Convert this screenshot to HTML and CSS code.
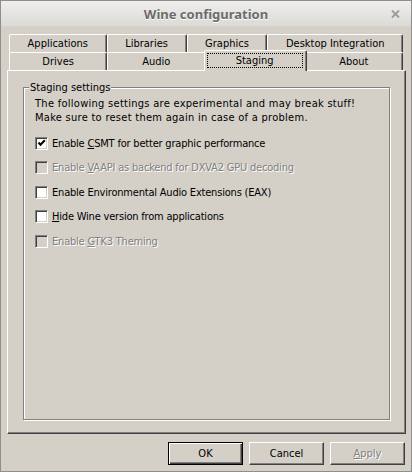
FILE: index.html
```html
<!DOCTYPE html>
<html lang="en">
<head>
  <meta charset="UTF-8">
  <title>Wine configuration</title>
  <link rel="stylesheet" href="styles.css">
</head>
<body>
  <div class="window">
    <!-- Title Bar -->
    <div class="titlebar">
      <span></span>
      <span class="title">Wine configuration</span>
      <span class="close">
        <svg width="9" height="8" viewBox="0 0 9 8"><path d="M1 0.5 L8 7.5 M8 0.5 L1 7.5" stroke="#999" stroke-width="1.8"/></svg>
      </span>
    </div>

    <div class="content">
      <!-- Tabs -->
      <div class="tabs">
        <div class="tab-row">
          <div class="tab">Applications</div>
          <div class="tab">Libraries</div>
          <div class="tab">Graphics</div>
          <div class="tab">Desktop Integration</div>
        </div>
        <div class="tab-row front">
          <div class="tab">Drives</div>
          <div class="tab">Audio</div>
          <div class="tab selected"><span class="focus">Staging</span></div>
          <div class="tab">About</div>
        </div>
      </div>

      <!-- Staging Page -->
      <div class="panel">
        <fieldset class="group">
          <legend>Staging settings</legend>
          <p class="note">The following settings are experimental and may break stuff!<br>Make sure to reset them again in case of a problem.</p>
          <div class="checks">
            <label class="check">
              <span class="box"><svg width="9" height="9" viewBox="0 0 9 9"><path d="M1.5 3.5 L3.5 5.8 L7.8 1.2" fill="none" stroke="#000" stroke-width="2"/></svg></span>
              <span>Enable <u>C</u>SMT for better graphic performance</span>
            </label>
            <label class="check disabled">
              <span class="box"></span>
              <span>Enable <u>V</u>AAPI as backend for DXVA2 GPU decoding</span>
            </label>
            <label class="check">
              <span class="box"></span>
              <span>Enable Environmental Audio Extensions (EAX)</span>
            </label>
            <label class="check">
              <span class="box"></span>
              <span><u>H</u>ide Wine version from applications</span>
            </label>
            <label class="check disabled">
              <span class="box"></span>
              <span>Enable <u>G</u>TK3 Theming</span>
            </label>
          </div>
        </fieldset>
      </div>

      <!-- Dialog Buttons -->
      <div class="buttons">
        <button class="btn default">OK</button>
        <button class="btn">Cancel</button>
        <button class="btn disabled"><u>A</u>pply</button>
      </div>
    </div>
  </div>
</body>
</html>
```

FILE: styles.css
```css
/* General Styles */
:root {
  --face: #d4d0c8;
  --light: #ffffff;
  --shadow: #808080;
  --dark: #404040;
  --text: #000000;
  --grayed: #808080;
}

body {
  margin: 0;
  font-family: "DejaVu Sans Condensed", "DejaVu Sans", sans-serif;
  font-size: 11px;
  color: var(--text);
}

.window {
  width: 412px;
  height: 472px;
  box-sizing: border-box;
  border: 1px solid #8e8e8e;
  background: var(--face);
  display: flex;
  flex-direction: column;
}

/* Title Bar */
.titlebar {
  height: 25px;
  flex: none;
  display: grid;
  grid-template-columns: 1fr auto 1fr;
  align-items: center;
  background: linear-gradient(#efeeec, #dcdad6);
}

.title {
  font-family: "Noto Sans", sans-serif;
  font-weight: 700;
  font-size: 13px;
  color: #6b6b6b;
  text-shadow: 0 1px #fff;
}

.close {
  justify-self: end;
  margin-right: 11px;
  display: flex;
}

/* Content */
.content {
  flex: 1;
  display: flex;
  flex-direction: column;
  padding: 8px 5px 6px 6px;
}

/* Tabs */
.tabs {
  flex: none;
}

.tab-row {
  display: flex;
  height: 18px;
  margin: 0 3px 0 2px;
}

.tab {
  flex: 1 1 auto;
  box-sizing: border-box;
  border-top: 1px solid var(--light);
  border-left: 1px solid var(--light);
  border-right: 1px solid var(--dark);
  border-radius: 2px 2px 0 0;
  box-shadow: inset -1px 0 var(--shadow);
  text-align: center;
  line-height: 17px;
  white-space: nowrap;
}

.front .tab {
  flex: 1 1 0;
}

.tab.selected {
  position: relative;
  z-index: 1;
  margin: -2px -2px -1px;
  height: 21px;
  background: var(--face);
  padding: 2px 3px 0 2px;
}

.focus {
  display: block;
  border: 1px dotted #000;
  line-height: 13px;
}

/* Panel */
.panel {
  flex: 1;
  display: flex;
  flex-direction: column;
  border: 1px solid;
  border-color: var(--light) var(--dark) var(--dark) var(--light);
  box-shadow: inset -1px -1px var(--shadow);
  padding: 10px 15px 13px 15px;
}

.group {
  flex: 1;
  margin: 0;
  min-width: 0;
  padding: 3px 11px 0 11px;
  border: 1px solid var(--shadow);
  box-shadow: inset 1px 1px var(--light), 1px 1px var(--light);
}

.group legend {
  padding: 0 1px;
  margin-left: -6px;
  line-height: 13px;
  background: var(--face);
}

.note {
  margin: 0 0 11px;
  line-height: 14px;
  letter-spacing: 0.28px;
}

/* Check Boxes */
.checks {
  display: flex;
  flex-direction: column;
  gap: 10.5px;
}

.check {
  display: flex;
  align-items: center;
  gap: 4px;
  height: 14px;
  white-space: nowrap;
  letter-spacing: -0.2px;
}

.box {
  width: 9px;
  height: 9px;
  flex: none;
  padding: 1px;
  border: 1px solid;
  border-color: var(--shadow) var(--light) var(--light) var(--shadow);
  box-shadow: inset 1px 1px var(--dark), inset -1px -1px var(--face);
  background: var(--light);
  display: flex;
}

.check.disabled .box {
  background: var(--face);
}

.check.disabled,
.btn.disabled {
  color: var(--grayed);
  text-shadow: 1px 1px var(--light);
}

/* Buttons */
.buttons {
  flex: none;
  display: flex;
  justify-content: flex-end;
  gap: 6px;
  margin: 8px 1px 0 0;
}

.btn {
  width: 75px;
  height: 23px;
  padding: 0;
  font: inherit;
  color: var(--text);
  background: var(--face);
  border: 1px solid;
  border-color: var(--light) var(--dark) var(--dark) var(--light);
  box-shadow: inset -1px -1px var(--shadow);
}

.btn.default {
  border-color: #000;
  box-shadow: inset 1px 1px var(--light), inset -1px -1px var(--dark), inset -2px -2px var(--shadow);
}
```
